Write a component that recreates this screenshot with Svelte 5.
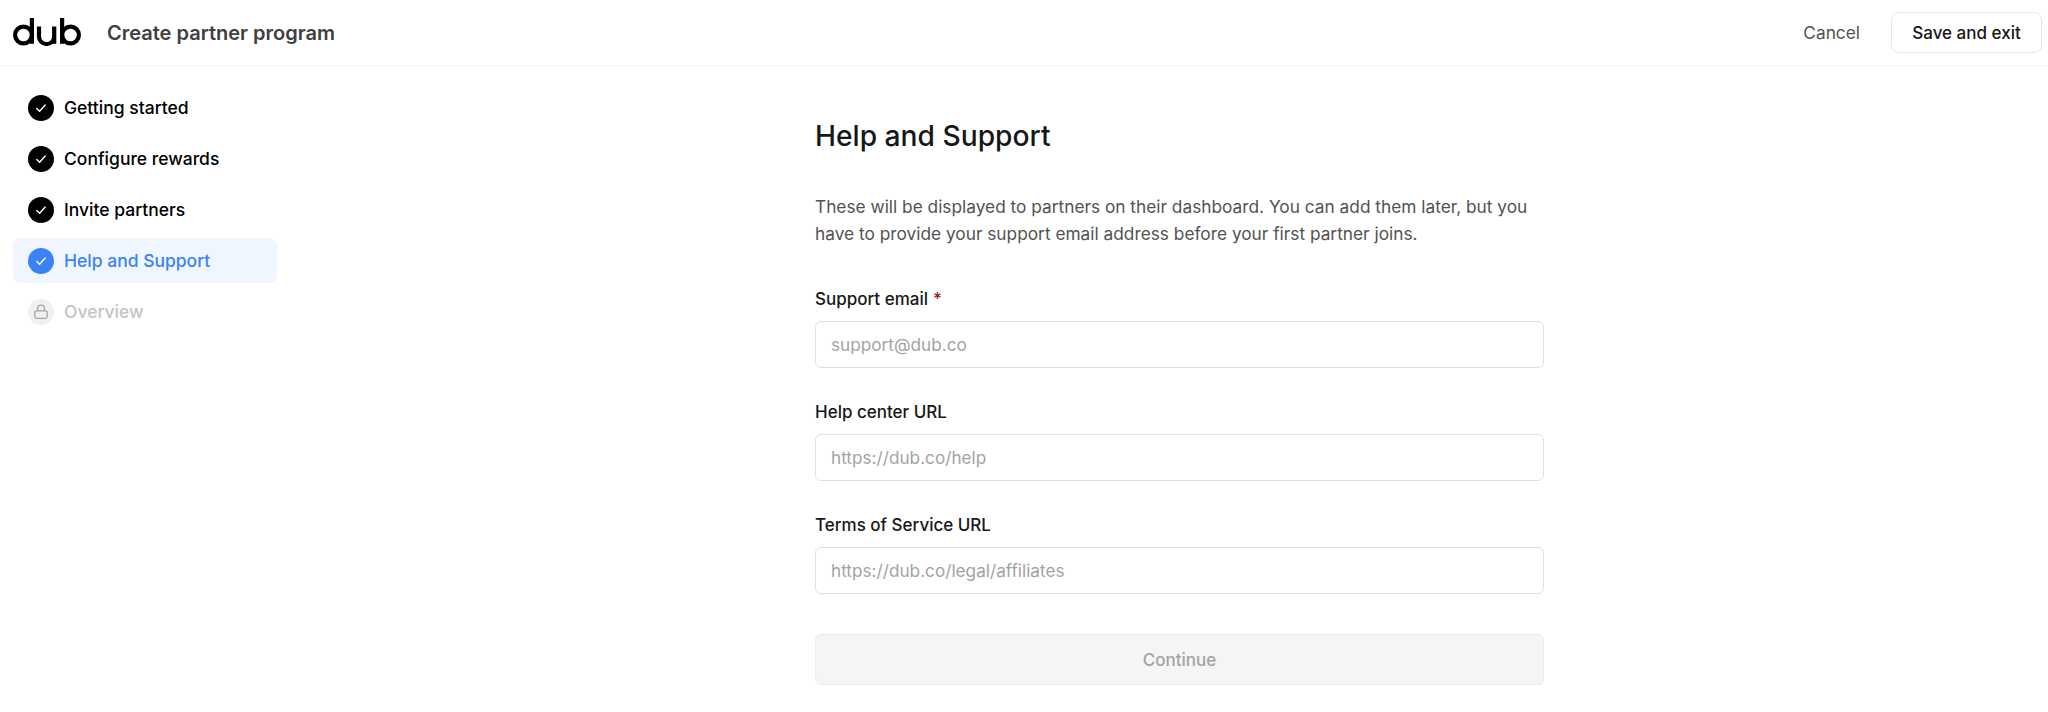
<script>
  const steps = [
    { label: "Getting started", state: "done" },
    { label: "Configure rewards", state: "done" },
    { label: "Invite partners", state: "done" },
    { label: "Help and Support", state: "active" },
    { label: "Overview", state: "locked" }
  ];

  const fields = [
    { label: "Support email", placeholder: "support@dub.co", required: true },
    { label: "Help center URL", placeholder: "https://dub.co/help" },
    { label: "Terms of Service URL", placeholder: "https://dub.co/legal/affiliates" }
  ];
</script>

<div class="page">
  <header class="top">
    <div class="brand">
      <svg class="logo" width="70" height="30" viewBox="0 0 70 30" fill="none" stroke="#000" stroke-width="4.2" aria-label="dub">
        <circle cx="10.5" cy="18" r="8.4" />
        <path d="M18.9 1v25.8" />
        <path d="M26 9.5v10a7.6 7.6 0 0 0 15.2 0v-10" />
        <path d="M41.2 19.5v7.3" />
        <circle cx="57.5" cy="18" r="8.4" />
        <path d="M49.1 1v25.8" />
      </svg>
      <span class="title">Create partner program</span>
    </div>
    <div class="actions">
      <button type="button" class="cancel">Cancel</button>
      <button type="button" class="save">Save and exit</button>
    </div>
  </header>

  <div class="body">
    <nav class="side">
      {#each steps as step}
        <div class="step {step.state}">
          <span class="dot">
            {#if step.state === "locked"}
              <svg width="16" height="16" viewBox="0 0 14 14" fill="none" stroke="currentColor" stroke-width="1.1">
                <rect x="1.6" y="6" width="10.8" height="6.6" rx="1.6" />
                <path d="M4 6V4a3 3 0 0 1 6 0v2" />
              </svg>
            {:else}
              <svg width="12" height="12" viewBox="0 0 12 12" fill="none" stroke="#fff" stroke-width="1.4" stroke-linecap="round" stroke-linejoin="round">
                <path d="M1.8 6.4 4.6 9.2 10.2 3" />
              </svg>
            {/if}
          </span>
          <span>{step.label}</span>
        </div>
      {/each}
    </nav>

    <main class="main">
      <h1>Help and Support</h1>
      <p>These will be displayed to partners on their dashboard. You can add them later, but you have to provide your support email address before your first partner joins.</p>
      <form class="form">
        {#each fields as f}
          <label class="field">
            <span class="lbl">{f.label}{#if f.required}<span class="req">*</span>{/if}</span>
            <input type="text" placeholder={f.placeholder} />
          </label>
        {/each}
        <button type="button" class="continue" disabled>Continue</button>
      </form>
    </main>
  </div>
</div>

<style>
  :global(body) {
    margin: 0;
    background: #fff;
  }

  .page {
    height: 712px;
    overflow: hidden;
    font-family: Inter, "Liberation Sans", sans-serif;
    color: #171717;
  }

  .top {
    display: flex;
    justify-content: space-between;
    align-items: center;
    height: 66px;
    box-sizing: border-box;
    padding: 0 6px 0 13px;
    border-bottom: 1px solid #f5f5f5;
  }

  .brand {
    display: flex;
    align-items: center;
    gap: 24px;
  }

  .logo {
    display: block;
    margin-top: -1px;
  }

  .title {
    font-size: 20px;
    font-weight: 600;
    color: #404040;
  }

  .actions {
    display: flex;
    align-items: center;
    gap: 31px;
  }

  button {
    font-family: inherit;
    font-size: 17px;
    font-weight: 500;
    background: none;
    border: none;
    padding: 0;
  }

  .cancel {
    color: #525252;
    font-size: 17.3px;
    font-weight: 400;
  }

  .save {
    width: 151px;
    height: 41px;
    border: 1px solid #e5e5e5;
    border-radius: 8px;
    color: #171717;
    background: #fff;
  }

  .body {
    display: grid;
    grid-template-columns: 277px 729px;
    column-gap: 525px;
    padding-left: 13px;
    box-sizing: border-box;
  }

  .side {
    display: flex;
    flex-direction: column;
    gap: 6px;
    padding-top: 19px;
    grid-column: 1;
    width: 264px;
  }

  .step {
    display: flex;
    align-items: center;
    gap: 10px;
    height: 45px;
    padding: 0 15px;
    box-sizing: border-box;
    border-radius: 8px;
    font-size: 17.5px;
    font-weight: 500;
    color: #000;
  }

  .dot {
    display: flex;
    align-items: center;
    justify-content: center;
    width: 26px;
    height: 26px;
    border-radius: 50%;
    background: #000;
    flex: none;
  }

  .step.active {
    background: #eff6ff;
    color: #3b82f6;
  }

  .step.active .dot {
    background: #3b82f6;
  }

  .step.locked {
    color: #c4c4c4;
  }

  .step.locked .dot {
    background: #f0f0f0;
    color: #a3a3a3;
  }

  .main {
    grid-column: 2;
    padding-top: 51px;
  }

  h1 {
    margin: 0;
    font-size: 28.2px;
    font-weight: 500;
    line-height: 38px;
    color: #171717;
  }

  p {
    margin: 38px 0 0;
    font-size: 17.3px;
    line-height: 27px;
    color: #525252;
  }

  .form {
    display: flex;
    flex-direction: column;
    gap: 32px;
    margin-top: 40px;
  }

  .field {
    display: flex;
    flex-direction: column;
    gap: 10px;
  }

  .lbl {
    font-size: 17px;
    font-weight: 500;
    line-height: 24px;
    color: #171717;
  }

  .req {
    margin-left: 5px;
    color: #991b1b;
  }

  input {
    height: 47px;
    box-sizing: border-box;
    padding: 0 15px;
    border: 1px solid #e0e0e0;
    border-radius: 6px;
    font-family: inherit;
    font-size: 17.2px;
    outline: none;
    background: #fff;
  }

  input::placeholder {
    color: #a3a3a3;
  }

  .continue {
    margin-top: 8px;
    height: 51px;
    border: 1px solid #ececec;
    border-radius: 6px;
    background: #f5f5f5;
    color: #a3a3a3;
  }
</style>
